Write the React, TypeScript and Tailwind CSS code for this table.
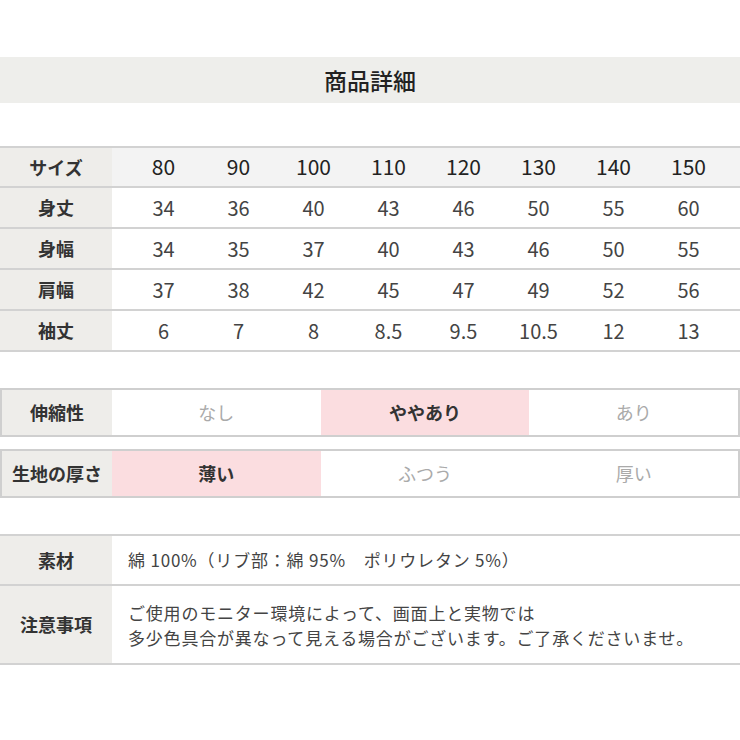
import React from "react";

const font = { fontFamily: '"Noto Sans CJK JP", "Noto Sans", sans-serif' };

const sizes = ["80", "90", "100", "110", "120", "130", "140", "150"];
const rows: [string, string[]][] = [
  ["身丈", ["34", "36", "40", "43", "46", "50", "55", "60"]],
  ["身幅", ["34", "35", "37", "40", "43", "46", "50", "55"]],
  ["肩幅", ["37", "38", "42", "45", "47", "49", "52", "56"]],
  ["袖丈", ["6", "7", "8", "8.5", "9.5", "10.5", "12", "13"]],
];

function Scale({ label, items, active }: { label: string; items: string[]; active: number }) {
  return (
    <div className="flex h-[49px] border-2 border-[#cfcfcf]">
      <div className="w-[110px] shrink-0 bg-[#eeedea] flex items-center justify-center text-[18px] font-bold text-[#333]">
        {label}
      </div>
      {items.map((t, i) => (
        <div
          key={t}
          className={
            i === active
              ? "flex-1 flex items-center justify-center bg-[#fbdde0] text-[18px] font-bold text-[#333]"
              : "flex-1 flex items-center justify-center bg-white text-[18px] text-[#aaa]"
          }
        >
          {t}
        </div>
      ))}
    </div>
  );
}

export default function App() {
  return (
    <div className="w-[740px] h-[740px] bg-white pt-[57px]" style={font}>
      <div className="h-[46px] bg-[#eeeeeb] flex items-center justify-center text-[23px] font-medium text-[#222]">
        商品詳細
      </div>

      <div className="mt-[43px] border-t-2 border-[#d2d2d2]">
        <div className="flex h-[40px] border-b-2 border-[#d2d2d2] bg-[#f3f3f3]">
          <div className="w-[112px] shrink-0 bg-[#eeedea] flex items-center justify-center text-[18px] font-bold text-[#333]">
            サイズ
          </div>
          <div className="flex flex-1 px-[14px]">
            {sizes.map((s) => (
              <div key={s} className="w-[75px] flex items-center justify-center text-[21px] text-[#222]">
                {s}
              </div>
            ))}
          </div>
        </div>
        {rows.map(([label, vals]) => (
          <div key={label} className="flex h-[41px] border-b-2 border-[#d2d2d2] bg-white">
            <div className="w-[112px] shrink-0 bg-[#eeedea] flex items-center justify-center text-[18px] font-bold text-[#333]">
              {label}
            </div>
            <div className="flex flex-1 px-[14px]">
              {vals.map((v, i) => (
                <div key={i} className="w-[75px] flex items-center justify-center text-[20px] text-[#444]">
                  {v}
                </div>
              ))}
            </div>
          </div>
        ))}
      </div>

      <div className="mt-[36px] flex flex-col gap-[12px]">
        <Scale label="伸縮性" items={["なし", "ややあり", "あり"]} active={1} />
        <Scale label="生地の厚さ" items={["薄い", "ふつう", "厚い"]} active={0} />
      </div>

      <div className="mt-[36px] border-t-2 border-[#d2d2d2]">
        <div className="flex h-[50px] border-b-2 border-[#d2d2d2]">
          <div className="w-[112px] shrink-0 bg-[#eeedea] flex items-center justify-center text-[18px] font-bold text-[#333]">
            素材
          </div>
          <div className="flex-1 flex items-center pl-[16px] text-[17px] tracking-[0.8px] text-[#444]">
            綿 100%（リブ部：綿 95%　ポリウレタン 5%）
          </div>
        </div>
        <div className="flex h-[79px] border-b-2 border-[#d2d2d2]">
          <div className="w-[112px] shrink-0 bg-[#eeedea] flex items-center justify-center text-[18px] font-bold text-[#333]">
            注意事項
          </div>
          <div className="flex-1 flex flex-col justify-center pl-[16px] text-[17px] tracking-[0.8px] leading-[25px] text-[#444]">
            <div>ご使用のモニター環境によって、画面上と実物では</div>
            <div>多少色具合が異なって見える場合がございます。ご了承くださいませ。</div>
          </div>
        </div>
      </div>
    </div>
  );
}
